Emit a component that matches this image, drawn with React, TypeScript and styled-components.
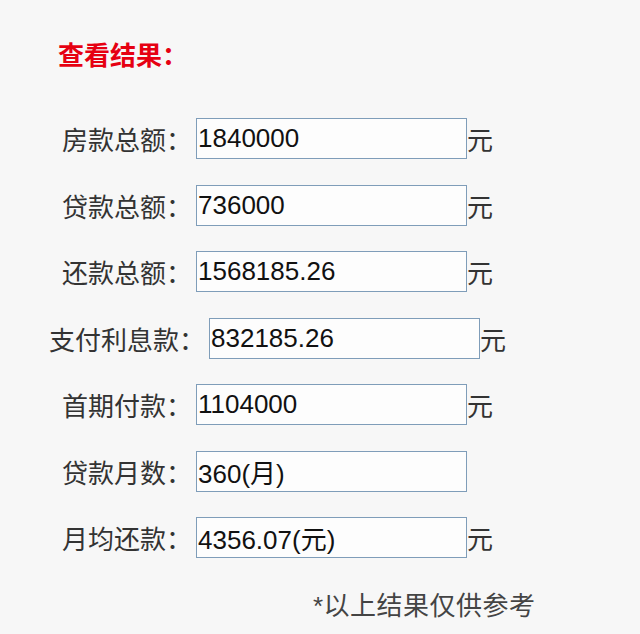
import styled, { createGlobalStyle } from "styled-components";

const GlobalStyle = createGlobalStyle`
  html, body {
    margin: 0;
    padding: 0;
    background: #f7f7f7;
  }
  body {
    font-family: "Liberation Sans", "Noto Sans CJK SC", sans-serif;
  }
`;

const Page = styled.div`
  width: 640px;
  height: 634px;
  box-sizing: border-box;
  padding-top: 36px;
  background: #f7f7f7;
  overflow: hidden;
`;

const Title = styled.h2`
  margin: 0 0 46px 58px;
  font-family: "Noto Sans CJK SC", sans-serif;
  font-size: 26px;
  line-height: 36px;
  font-weight: 700;
  color: #e60012;
`;

const Form = styled.div`
  width: 555px;
  display: flex;
  flex-direction: column;
  align-items: center;
  gap: 25.5px;
`;

const Row = styled.div`
  display: flex;
  align-items: center;
  height: 41px;
`;

const Label = styled.label`
  margin-right: 4px;
  font-family: "Noto Sans CJK SC", sans-serif;
  font-size: 26px;
  line-height: 41px;
  color: #333;
  white-space: nowrap;
`;

const Field = styled.input`
  width: 271px;
  height: 41px;
  box-sizing: border-box;
  margin: 0;
  padding: 0 0 0 1px;
  border: 1px solid #7f9db9;
  background: #fdfdfd;
  font-family: "Liberation Sans", "Noto Sans CJK SC", sans-serif;
  font-size: 26px;
  color: #111;
  outline: none;
`;

const Unit = styled.span<{ $hidden?: boolean }>`
  width: 26px;
  font-family: "Noto Sans CJK SC", sans-serif;
  font-size: 26px;
  line-height: 41px;
  color: #333;
  visibility: ${(props) => (props.$hidden ? "hidden" : "visible")};
`;

const Note = styled.p`
  margin: 30px 0 0 313px;
  font-size: 26px;
  line-height: 36px;
  letter-spacing: 0.5px;
  color: #444;
  white-space: nowrap;
`;

const results = [
  { label: "房款总额：", value: "1840000", unit: true },
  { label: "贷款总额：", value: "736000", unit: true },
  { label: "还款总额：", value: "1568185.26", unit: true },
  { label: "支付利息款：", value: "832185.26", unit: true },
  { label: "首期付款：", value: "1104000", unit: true },
  { label: "贷款月数：", value: "360(月)", unit: false },
  { label: "月均还款：", value: "4356.07(元)", unit: true },
];

function App() {
  return (
    <>
      <GlobalStyle />
      <Page>
        <Title>查看结果：</Title>
        <Form>
          {results.map((item) => (
            <Row key={item.label}>
              <Label>{item.label}</Label>
              <Field readOnly value={item.value} />
              <Unit $hidden={!item.unit}>元</Unit>
            </Row>
          ))}
        </Form>
        <Note>*以上结果仅供参考</Note>
      </Page>
    </>
  );
}

export default App;
